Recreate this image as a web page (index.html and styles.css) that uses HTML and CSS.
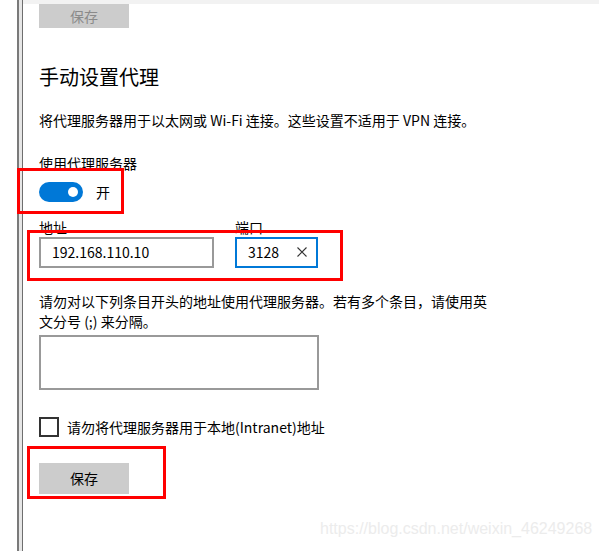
FILE: index.html
```html
<!DOCTYPE html>
<html lang="zh-CN">
<head>
<meta charset="utf-8">
<title>代理</title>
<link rel="stylesheet" href="styles.css">
</head>
<body>
<div class="window">
  <div class="edge">
    <div class="edge-outer"></div>
    <div class="edge-fill"></div>
    <div class="edge-inner"></div>
  </div>
  <div class="pane">
    <div class="topband"></div>
    <div class="content">
      <button class="btn btn-disabled btn-top">保存</button>
      <h2 class="heading">手动设置代理</h2>
      <p class="desc">将代理服务器用于以太网或 Wi-Fi 连接。这些设置不适用于 VPN 连接。</p>
      <div class="label label-use">使用代理服务器</div>
      <div class="toggle-row">
        <span class="toggle"><span class="knob"></span></span>
        <span class="toggle-text">开</span>
      </div>
      <div class="fields">
        <div class="field field-addr">
          <div class="label">地址</div>
          <div class="input">192.168.110.10</div>
        </div>
        <div class="field field-port">
          <div class="label">端口</div>
          <div class="input input-focus">
            <span>3128</span>
            <svg class="clear" width="10" height="10" viewBox="0 0 10 10"><path d="M0.5 0.5 L9.5 9.5 M9.5 0.5 L0.5 9.5" stroke="#333" stroke-width="1.1" fill="none"/></svg>
          </div>
        </div>
      </div>
      <p class="desc desc-excl">请勿对以下列条目开头的地址使用代理服务器。若有多个条目，请使用英文分号 (;) 来分隔。</p>
      <div class="textarea"></div>
      <div class="check-row">
        <span class="checkbox"></span>
        <span class="check-text">请勿将代理服务器用于本地(Intranet)地址</span>
      </div>
      <button class="btn btn-save">保存</button>
    </div>
  </div>
  <div class="mark mark-toggle"></div>
  <div class="mark mark-fields"></div>
  <div class="mark mark-save"></div>
  <div class="watermark">https://blog.csdn.net/weixin_46249268</div>
</div>
</body>
</html>
```

FILE: styles.css
```css
* { box-sizing: border-box; }
html, body { margin: 0; padding: 0; background: #fff; }
body {
  font-family: "Noto Sans CJK SC", "Microsoft YaHei", sans-serif;
  color: #000;
  font-size: 14px;
}
.window {
  position: relative;
  width: 599px;
  height: 551px;
  overflow: hidden;
  display: flex;
}
.edge {
  display: flex;
  padding-left: 17px;
  flex: none;
}
.edge-outer { width: 2px; background: #7a7a7a; }
.edge-fill { width: 3px; background: #e6e6e6; }
.edge-inner { width: 1px; background: #6e6e6e; }
.pane { flex: 1; display: flex; flex-direction: column; }
.topband { height: 4px; background: #f2f2f2; }
.content {
  padding-left: 16px;
  display: flex;
  flex-direction: column;
  align-items: flex-start;
}
.btn {
  font-family: inherit;
  font-size: 14px;
  border: none;
  background: #cccccc;
  width: 90px;
  padding: 0;
  margin: 0;
  color: #000;
}
.btn-top { height: 24px; color: #8a8a8a; line-height: 24px; padding-bottom: 2px; }
.heading {
  font-weight: normal;
  font-size: 20px;
  line-height: 28px;
  margin: 35px 0 0;
}
.desc { margin: 19px 0 0; line-height: 20px; }
.label { line-height: 20px; }
.label-use { margin-top: 23px; }
.toggle-row { display: flex; align-items: center; margin-top: 9px; height: 20px; }
.toggle {
  width: 44px; height: 20px; border-radius: 10px;
  background: #0078d7;
  display: flex; align-items: center; justify-content: flex-end;
  padding-right: 5px;
}
.knob { width: 10px; height: 10px; border-radius: 50%; background: #fff; }
.toggle-text { margin-left: 13px; line-height: 20px; }
.fields { display: flex; gap: 21px; margin-top: 15px; }
.field-addr { width: 175px; }
.field-port { width: 83px; }
.input {
  height: 31px;
  border: 2px solid #999;
  display: flex; align-items: center;
  padding-left: 11px;
  padding-right: 10px;
  padding-bottom: 1px;
  justify-content: space-between;
}
.input-focus { border-color: #0078d7; }
.clear { display: block; margin-right: -1px; }
.desc-excl { width: 456px; margin-top: 23px; }
.textarea { width: 280px; height: 55px; border: 2px solid #999; margin-top: 4px; }
.check-row { display: flex; align-items: center; margin-top: 27px; height: 20px; }
.checkbox { width: 20px; height: 20px; border: 2px solid #333; }
.check-text { margin-left: 8px; line-height: 20px; }
.btn-save { height: 31px; margin-top: 26px; line-height: 31px; }
.mark { position: absolute; border: 3px solid #ff0000; }
.mark-toggle { left: 17px; top: 168px; width: 107px; height: 46px; }
.mark-fields { left: 27px; top: 230px; width: 316px; height: 51px; }
.mark-save { left: 27px; top: 446px; width: 139px; height: 53px; }
.watermark {
  position: absolute;
  left: 320px;
  top: 520px;
  font-family: "Liberation Sans", Arial, sans-serif;
  font-size: 16px;
  color: #ececec;
  white-space: nowrap;
}
```
